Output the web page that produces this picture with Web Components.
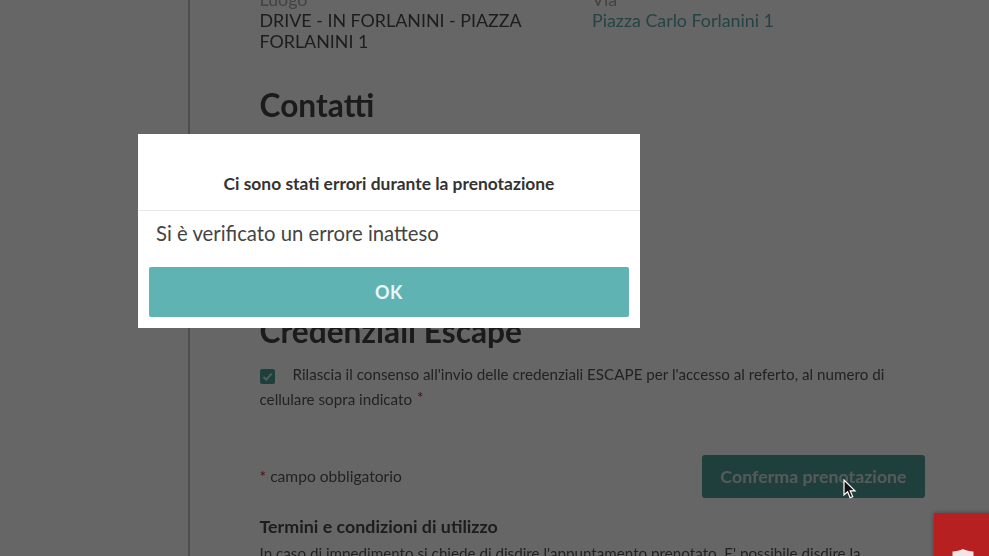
<!DOCTYPE html>
<html lang="it">
<head>
<meta charset="utf-8">
<title>Prenotazione</title>
<style>
  html, body { margin: 0; padding: 0; height: 100%; overflow: hidden; background: #fff; }
  body { font-family: Lato, "Open Sans", sans-serif; }
</style>
</head>
<body>
<booking-page>
  <booking-info></booking-info>
  <section-title>Contatti</section-title>
  <section-title class="second">Credenziali Escape</section-title>
  <consent-row>Rilascia il consenso all'invio delle credenziali ESCAPE per l'accesso al referto, al numero di cellulare sopra indicato</consent-row>
  <submit-row></submit-row>
  <terms-block></terms-block>
</booking-page>
<error-dialog>
  <span slot="title">Ci sono stati errori durante la prenotazione</span>
  Si è verificato un errore inatteso
  <span slot="action">OK</span>
</error-dialog>
<recaptcha-badge></recaptcha-badge>
<mouse-cursor></mouse-cursor>

<script>
function define(name, html) {
  customElements.define(name, class extends HTMLElement {
    constructor() {
      super();
      this.attachShadow({ mode: 'open' }).innerHTML = html;
    }
  });
}

define('booking-page', `
<style>
  :host { display: block; height: 556px; overflow: hidden; background: #fff; color: #444; filter: blur(.35px); }
  .rail { display: flow-root; margin-left: 188px; height: 100%; border-left: 2px solid #c4c4c4; padding: 0 64px 0 70px; box-sizing: border-box; }
  .inner { margin-top: -11px; margin-left: -.5px; }
</style>
<div class="rail"><div class="inner"><slot></slot></div></div>`);

define('booking-info', `
<style>
  :host { display: grid; grid-template-columns: 332.5px 1fr; font-size: 17.85px; line-height: 21px; color: #4a4a4a; }
  label { display: block; color: #a8a8a8; }
  .link { color: #5fa8a8; }
</style>
<div><label>Luogo</label>DRIVE - IN FORLANINI - PIAZZA<br>FORLANINI 1</div>
<div><label>Via</label><span class="link">Piazza Carlo Forlanini 1</span></div>`);

define('section-title', `
<style>
  :host { display: block; font-size: 31.7px; font-weight: 700; line-height: 36px; color: #444; margin-top: 35px; }
  :host(.second) { margin-top: 190px; }
</style>
<slot></slot>`);

define('consent-row', `
<style>
  :host { display: block; font-size: 15.2px; line-height: 24.5px; color: #555; margin-top: 13px; }
  .box { display: inline-flex; vertical-align: -2px; width: 15px; height: 15px; background: #4f9e99; border-radius: 2px; margin-right: 18px; align-items: center; justify-content: center; }
  .req { color: #c0202a; font-size: 15px; line-height: 0; vertical-align: 2px; margin-left: 1px; }
</style>
<span class="box"><svg width="11" height="11" viewBox="0 0 11 11"><path d="M1.500 6l2.800 2.600L9.600 2.600" fill="none" stroke="#d8eeee" stroke-width="1.800"/></svg></span><slot></slot> <span class="req">*</span>`);

define('submit-row', `
<style>
  :host { display: flex; justify-content: space-between; align-items: center; margin-top: 44px; font-size: 15.6px; color: #555; }
  .note { margin-bottom: 2px; }
  .req { color: #c0202a; }
  button { width: 223px; height: 43px; border: 0; border-radius: 3px; background: #4f9e99; color: #d4e2df; font: 700 17.8px Lato, sans-serif; padding: 0 0 2px; }
</style>
<span class="note"><span class="req">*</span> campo obbligatorio</span>
<button>Conferma prenotazione</button>`);

define('terms-block', `
<style>
  :host { display: block; margin-top: 16px; }
  h3 { margin: 0 0 3px; font-size: 17.85px; line-height: 24px; font-weight: 700; color: #4a4a4a; }
  p { margin: 0; font-size: 15.2px; line-height: 24px; color: #555; white-space: nowrap; }
</style>
<h3>Termini e condizioni di utilizzo</h3>
<p>In caso di impedimento si chiede di disdire l'appuntamento prenotato. E' possibile disdire la</p>`);

define('error-dialog', `
<style>
  :host { position: fixed; inset: 0; background: rgba(0,0,0,.6); display: block; }
  .modal { position: absolute; left: 138px; top: 134px; width: 502px; height: 194px; background: #fff; display: flex; flex-direction: column; box-sizing: border-box; }
  .head { height: 77px; box-sizing: border-box; border-bottom: 1px solid #e8e8e8; display: flex; align-items: flex-end; justify-content: center; padding-bottom: 16px; font-size: 17.4px; line-height: 20px; font-weight: 700; color: #333; }
  .body { padding: 10px 18px 0; font-size: 20.3px; line-height: 24px; color: #444; flex: 1; }
  button { display: block; margin: 0 11px 11px; height: 50px; border: 0; border-radius: 2px; background: #5fb3b3; color: #eaf6f6; font: 700 18px Lato, sans-serif; letter-spacing: .5px; padding: 0; }
</style>
<div class="modal">
  <div class="head"><slot name="title"></slot></div>
  <div class="body"><slot></slot></div>
  <button><slot name="action"></slot></button>
</div>`);

define('recaptcha-badge', `
<style>
  :host { position: fixed; left: 934px; top: 513px; width: 70px; height: 60px; background: #b72020; box-shadow: 0 0 5px rgba(0,0,0,.35); display: block; }
  svg { position: absolute; left: 15px; top: 36px; }
</style>
<svg width="28" height="21" viewBox="0 0 26 20"><path d="M13 0c3 1.600 6.500 2.300 10 2.300V11c0 4-4 7-10 9-6-2-10-5-10-9V2.300C6.500 2.300 10 1.600 13 0z" fill="#f4e4e4"/></svg>`);

define('mouse-cursor', `
<style>
  :host { position: fixed; left: 843px; top: 479px; width: 14px; height: 21px; display: block; }
</style>
<svg width="14" height="21" viewBox="0 0 14 21"><path d="M1 1v15l3.600-3.300 2.500 6 2.600-1.100-2.500-5.800H12z" fill="#111" stroke="#fff" stroke-width="1.200"/></svg>`);
</script>
</body>
</html>
